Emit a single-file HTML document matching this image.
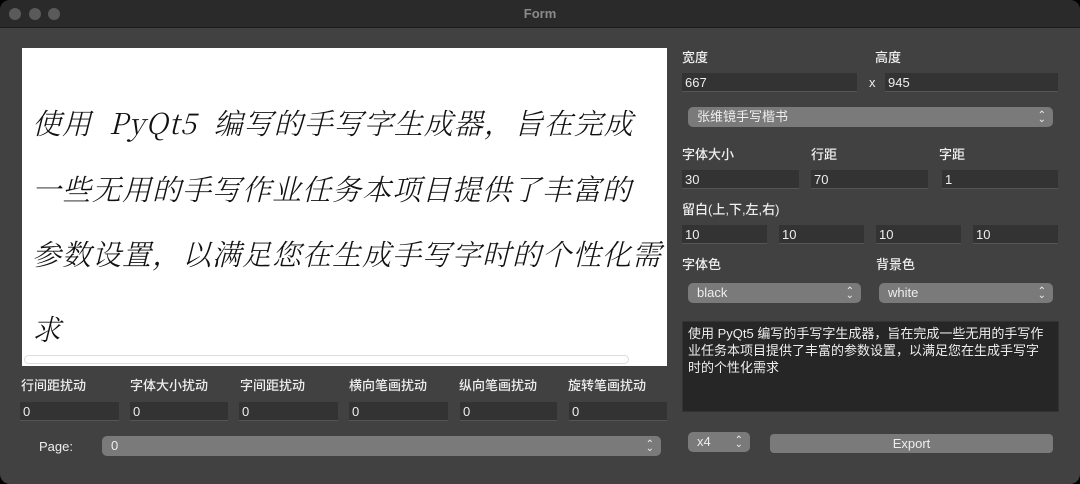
<!DOCTYPE html><html><head><meta charset="utf-8"><style>
*{box-sizing:border-box;margin:0;padding:0}
body{width:1080px;height:484px;background:#000;font-family:"Liberation Sans","Noto Sans CJK SC",sans-serif;color:#e6e6e6;font-size:13px;overflow:hidden;position:relative}
.win{position:absolute;left:0;top:0;width:1080px;height:484px;background:#414141;border-radius:10px;overflow:hidden}
.tb{position:absolute;left:0;top:0;width:1080px;height:28px;background:#2a2a2a;border-bottom:1px solid #1c1c1c;text-align:center;line-height:28px;font-weight:bold;color:#8a8a8a;font-size:13px}
.dot{position:absolute;top:8px;width:12px;height:12px;border-radius:50%;background:#5a5a5a}
.a{position:absolute}
.in{position:absolute;height:19px;background:#333;border-bottom:1px solid #555;color:#eee;font-size:13px;line-height:19px;padding-left:3px}
.lb{position:absolute;font-size:13px;color:#eee;font-weight:500}
.cb{position:absolute;height:20px;background:#7a7a7a;border-radius:5px;color:#eee;font-size:13px;line-height:20px;padding-left:9px}
.cb:after{content:"⌃";position:absolute;right:7px;top:-1px;font-size:10px}
.cb:before{content:"⌄";position:absolute;right:7px;top:3px;font-size:10px}
.cv{position:absolute;left:22px;top:48px;width:645px;height:318px;background:#fff;overflow:hidden}
.hw{position:absolute;left:10px;font-family:"Noto Serif CJK SC",serif;font-size:29px;color:#111;white-space:nowrap;font-weight:300;font-style:italic;letter-spacing:1px}
</style></head><body><div class="win">
<div class="tb">Form</div>
<div class="dot" style="left:9px"></div><div class="dot" style="left:29px"></div><div class="dot" style="left:48px"></div>
<div class="cv">
<div class="hw" style="top:54px">使用&nbsp; PyQt5&nbsp; 编写的手写字生成器，旨在完成</div>
<div class="hw" style="top:120px">一些无用的手写作业任务本项目提供了丰富的</div>
<div class="hw" style="top:185px">参数设置，以满足您在生成手写字时的个性化需</div>
<div class="hw" style="top:260px">求</div>
<div class="a" style="left:2px;top:307px;width:605px;height:9px;border:1px solid #ddd;border-radius:5px"></div>
</div>
<div class="lb" style="left:21px;top:375px">行间距扰动</div><div class="lb" style="left:130px;top:375px">字体大小扰动</div><div class="lb" style="left:240px;top:375px">字间距扰动</div><div class="lb" style="left:349px;top:375px">横向笔画扰动</div><div class="lb" style="left:459px;top:375px">纵向笔画扰动</div><div class="lb" style="left:568px;top:375px">旋转笔画扰动</div>
<div class="in" style="left:20px;top:402px;width:99px">0</div><div class="in" style="left:130px;top:402px;width:98px">0</div><div class="in" style="left:239px;top:402px;width:99px">0</div><div class="in" style="left:349px;top:402px;width:99px">0</div><div class="in" style="left:460px;top:402px;width:97px">0</div><div class="in" style="left:569px;top:402px;width:98px">0</div>
<div class="lb" style="left:39px;top:439px">Page:</div>
<div class="cb" style="left:102px;top:436px;width:559px">0</div>
<div class="lb" style="left:682px;top:47px">宽度</div><div class="lb" style="left:875px;top:47px">高度</div>
<div class="in" style="left:682px;top:73px;width:175px">667</div>
<div class="lb" style="left:869px;top:75px">x</div>
<div class="in" style="left:885px;top:73px;width:173px">945</div>
<div class="cb" style="left:688px;top:107px;width:365px">张维镜手写楷书</div>
<div class="lb" style="left:682px;top:144px">字体大小</div><div class="lb" style="left:811px;top:144px">行距</div><div class="lb" style="left:939px;top:144px">字距</div>
<div class="in" style="left:682px;top:170px;width:117px">30</div><div class="in" style="left:811px;top:170px;width:117px">70</div><div class="in" style="left:942px;top:170px;width:116px">1</div>
<div class="lb" style="left:682px;top:199px">留白(上,下,左,右)</div>
<div class="in" style="left:682px;top:225px;width:85px">10</div><div class="in" style="left:779px;top:225px;width:85px">10</div><div class="in" style="left:876px;top:225px;width:85px">10</div><div class="in" style="left:973px;top:225px;width:85px">10</div>
<div class="lb" style="left:682px;top:254px">字体色</div><div class="lb" style="left:876px;top:254px">背景色</div>
<div class="cb" style="left:688px;top:283px;width:173px">black</div><div class="cb" style="left:879px;top:283px;width:174px">white</div>
<div class="a" style="left:682px;top:321px;width:377px;height:91px;background:#262626;border:1px solid #333;padding:3px 3px 3px 5px;font-size:13px;line-height:17px;color:#eee;white-space:nowrap">使用 PyQt5 编写的手写字生成器，旨在完成一些无用的手写作<br>业任务本项目提供了丰富的参数设置，以满足您在生成手写字<br>时的个性化需求</div>
<div class="cb" style="left:688px;top:432px;width:62px">x4</div>
<div class="a" style="left:770px;top:434px;width:283px;height:19px;background:#7a7a7a;border-radius:4px;text-align:center;line-height:19px;color:#eee">Export</div>
</div></body></html>
